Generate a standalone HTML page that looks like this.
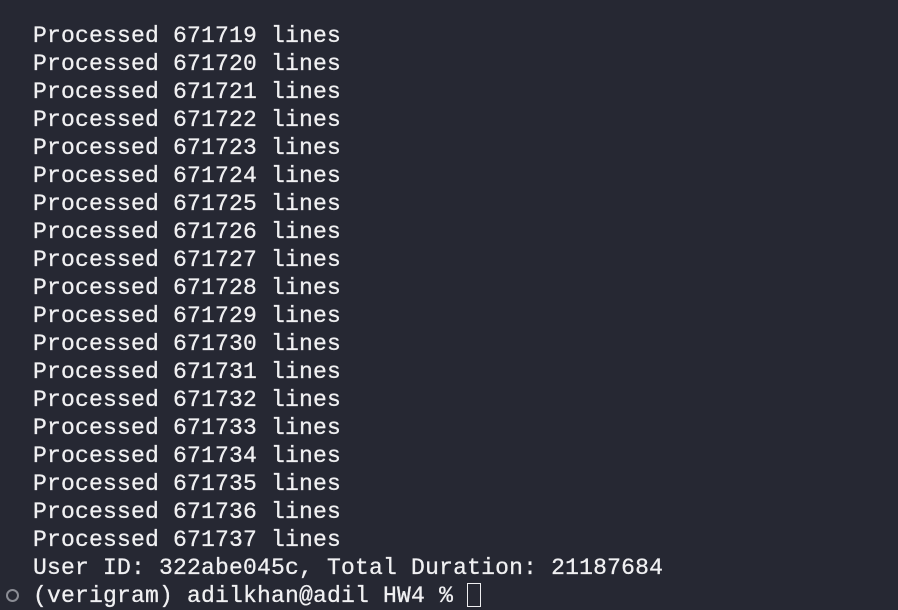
<!DOCTYPE html>
<html><head><style>
html,body{margin:0;padding:0;}
body{width:898px;height:610px;background:#262833;overflow:hidden;position:relative;}
pre{position:absolute;left:33px;top:22px;margin:0;font-family:"Liberation Mono",monospace;font-size:23px;letter-spacing:0.2px;line-height:28px;color:#f0f0f2;-webkit-text-stroke:0.3px #f0f0f2;}
.c{position:absolute;left:6px;top:589px;width:9px;height:9px;border:2px solid #8a8c94;border-radius:50%;}
.cur{display:inline-block;width:12px;height:22px;border:1.5px solid #eeeef0;vertical-align:-5px;-webkit-text-stroke:0;}
</style></head><body>
<pre>Processed 671719 lines
Processed 671720 lines
Processed 671721 lines
Processed 671722 lines
Processed 671723 lines
Processed 671724 lines
Processed 671725 lines
Processed 671726 lines
Processed 671727 lines
Processed 671728 lines
Processed 671729 lines
Processed 671730 lines
Processed 671731 lines
Processed 671732 lines
Processed 671733 lines
Processed 671734 lines
Processed 671735 lines
Processed 671736 lines
Processed 671737 lines
User ID: 322abe045c, Total Duration: 21187684
(verigram) adilkhan@adil HW4 % <span class="cur"></span></pre>
<div class="c"></div>
</body></html>
